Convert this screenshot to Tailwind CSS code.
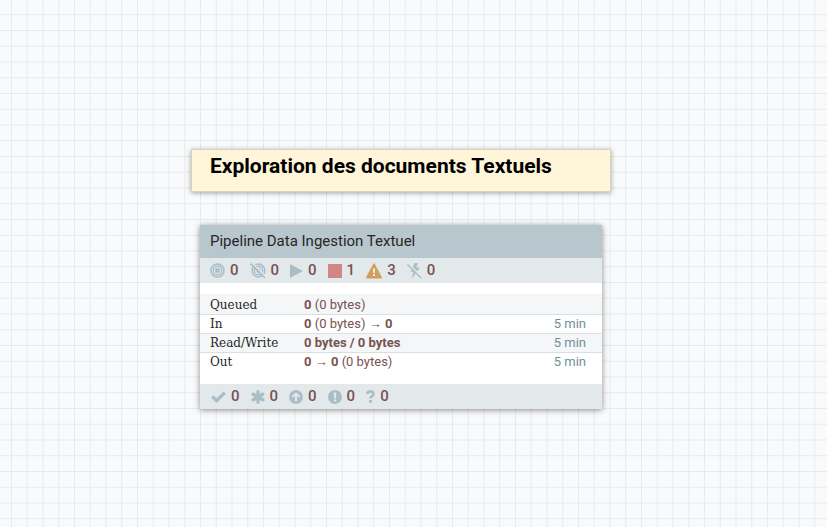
<!DOCTYPE html>
<html lang="fr">
<head>
<meta charset="utf-8">
<meta name="viewport" content="width=device-width, initial-scale=1">
<title>Exploration des documents Textuels</title>
<script src="https://cdn.jsdelivr.net/npm/@tailwindcss/browser@4"></script>
</head>
<body class="bg-[#f9fafb] font-['Roboto',sans-serif]">
<main class="relative min-h-screen w-full overflow-hidden">
  <!-- Canvas grid -->
  <svg class="absolute inset-0 h-full w-full" aria-hidden="true">
    <defs>
      <pattern id="grid" width="63" height="63" patternUnits="userSpaceOnUse">
        <path d="M11.5 0V63M27.25 0V63M43 0V63M58.75 0V63M0 14.75H63M0 30.5H63M0 46.25H63M0 62H63" stroke="#e5ebed" fill="none"/>
      </pattern>
    </defs>
    <rect width="100%" height="100%" fill="url(#grid)"/>
  </svg>

  <!-- Label -->
  <section class="absolute left-[191px] top-[149px] w-[420px] border border-[#d9d3bd] bg-[#fff5d8] px-[18px] pt-1 pb-3 shadow-[0_1px_5px_rgba(0,0,0,0.35)]">
    <h1 class="text-[21px] leading-[25px] font-bold text-black">Exploration des documents Textuels</h1>
  </section>

  <!-- Process group -->
  <section class="absolute left-[200px] top-[225px] w-[402px] bg-white shadow-[0_1px_6px_rgba(0,0,0,0.45)]">
    <h2 class="bg-[#b8c6cd] px-[10px] text-[15px] leading-[33px] text-[#262626]">Pipeline Data Ingestion Textuel</h2>
    <ul class="flex h-[25px] items-center gap-[11px] bg-[#e3e8eb] px-[10px] text-[15px] font-medium text-[#775351]">
      <li class="flex items-center gap-[5px]">
        <svg class="h-[15px] w-[15px]" viewBox="0 0 15 15" fill="none" stroke="#aabec7"><circle cx="7.5" cy="7.5" r="6.5" stroke-width="1.5"/><circle cx="7.5" cy="7.5" r="4.2" stroke-width="1.4"/><circle cx="7.5" cy="7.5" r="2.4" fill="#aabec7" stroke="none"/></svg>
        <span>0</span></li>
      <li class="flex items-center gap-[5px]">
        <svg class="h-[15px] w-[16px]" viewBox="0 0 16 15" fill="none" stroke="#aabec7"><circle cx="8.5" cy="7.5" r="6.4" stroke-width="1.5"/><circle cx="8.5" cy="7.5" r="4.2" stroke-width="1.4"/><circle cx="8.5" cy="7.5" r="2.3" fill="#aabec7" stroke="none"/><path d="M1.5 -.5L16 14" stroke="#e3e8eb" stroke-width="1.4"/><path d="M.5 .5L15 15" stroke-width="1.6"/></svg>
        <span>0</span></li>
      <li class="flex items-center gap-[5px]">
        <svg class="h-[14px] w-[13px]" viewBox="0 0 13 14" fill="#aabec7"><path d="M0 0L13 7L0 14Z"/></svg>
        <span>0</span></li>
      <li class="flex items-center gap-[5px]">
        <svg class="h-[14px] w-[14px]" viewBox="0 0 14 14" fill="#d18686"><path d="M0 0H14V14H0Z"/></svg>
        <span>1</span></li>
      <li class="flex items-center gap-[5px]">
        <svg class="h-[16px] w-[16px]" viewBox="0 0 16 16"><path d="M8 1.2L15.2 14.6H.8Z" fill="#cf9f5d" stroke="#cf9f5d" stroke-width="1.6" stroke-linejoin="round"/><path d="M6.9 5.4H9.1L8.8 10H7.2ZM7 11H9V13H7Z" fill="#f1eee9"/></svg>
        <span>3</span></li>
      <li class="flex items-center gap-[5px]">
        <svg class="h-[16px] w-[15px]" viewBox="0 0 15 16" fill="none"><path d="M7.6 0H11L9.2 4.6H13L4.6 16L6.4 8.8H3.6Z" fill="#aabec7"/><path d="M2 1L15 14.5" stroke="#e3e8eb" stroke-width="1.5"/><path d="M.4 1.4L14 15" stroke="#aabec7" stroke-width="1.4"/></svg>
        <span>0</span></li>
    </ul>

    <table class="mt-[11px] mb-[13px] w-full border-collapse text-left text-[13px] leading-[18px] text-[#775351]">
      <tbody>
        <tr class="border-b border-[#d9dfe2] bg-[#f4f6f7]"><th scope="row" class="w-[104px] pt-[2px] pl-[10px] font-['Roboto_Slab','DejaVu_Serif',serif] text-[12px] font-normal text-[#262626]">Queued</th><td class="pt-[2px]"><b>0</b> (0 bytes)</td><td></td></tr>
        <tr class="border-b border-[#d9dfe2]"><th scope="row" class="pl-[10px] font-['Roboto_Slab','DejaVu_Serif',serif] text-[12px] font-normal text-[#262626]">In</th><td><b>0</b> (0 bytes) <span class="font-['Liberation_Sans',sans-serif]">→</span> <b>0</b></td><td class="pr-4 text-right text-[#728e9b]">5 min</td></tr>
        <tr class="border-b border-[#d9dfe2] bg-[#f4f6f7]"><th scope="row" class="pl-[10px] font-['Roboto_Slab','DejaVu_Serif',serif] text-[12px] font-normal text-[#262626]">Read/Write</th><td><b>0 bytes / 0 bytes</b></td><td class="pr-4 text-right text-[#728e9b]">5 min</td></tr>
        <tr><th scope="row" class="pl-[10px] font-['Roboto_Slab','DejaVu_Serif',serif] text-[12px] font-normal text-[#262626]">Out</th><td><b>0</b> <span class="font-['Liberation_Sans',sans-serif]">→</span> <b>0</b> (0 bytes)</td><td class="pr-4 text-right text-[#728e9b]">5 min</td></tr>
      </tbody>
    </table>

    <ul class="flex h-[25px] items-center gap-[11px] bg-[#e3e8eb] px-[11px] text-[15px] font-medium text-[#775351]">
      <li class="flex items-center gap-[5px]">
        <svg class="h-[12px] w-[15px]" viewBox="0 0 15 12" fill="none" stroke="#aabec7" stroke-width="3.4"><path d="M1.2 5.6L5.6 9.6L13.8 1.6"/></svg>
        <span>0</span></li>
      <li class="flex items-center gap-[5px]">
        <svg class="h-[14px] w-[14px]" viewBox="0 0 14 14" stroke="#aabec7" stroke-width="3.4" stroke-linecap="round"><path d="M7 1.7V12.3M2.2 4.2L11.8 9.8M11.8 4.2L2.2 9.8"/></svg>
        <span>0</span></li>
      <li class="flex items-center gap-[5px]">
        <svg class="h-[14px] w-[14px]" viewBox="0 0 14 14" fill="none"><circle cx="7" cy="7" r="7" fill="#aabec7"/><path d="M7 11.4V3.6M3.3 7.2L7 3.5L10.7 7.2" stroke="#e3e8eb" stroke-width="1.9"/></svg>
        <span>0</span></li>
      <li class="flex items-center gap-[5px]">
        <svg class="h-[14px] w-[14px]" viewBox="0 0 14 14"><circle cx="7" cy="7" r="7" fill="#aabec7"/><path d="M5.8 2.4H8.2L7.9 8.4H6.1ZM5.9 9.4H8.1V11.6H5.9Z" fill="#e3e8eb"/></svg>
        <span>0</span></li>
      <li class="flex items-center gap-[5px]">
        <svg class="h-[13px] w-[9px]" viewBox="0 0 9 13" fill="none"><path d="M1 4Q1.7 1.4 4.5 1.4Q7.5 1.4 7.5 3.7Q7.5 5.2 6 6.1Q4.6 6.9 4.6 8.6" stroke="#aabec7" stroke-width="2.6"/><path d="M3.2 10H6V12.8H3.2Z" fill="#aabec7"/></svg>
        <span>0</span></li>
    </ul>
  </section>
</main>
</body>
</html>
